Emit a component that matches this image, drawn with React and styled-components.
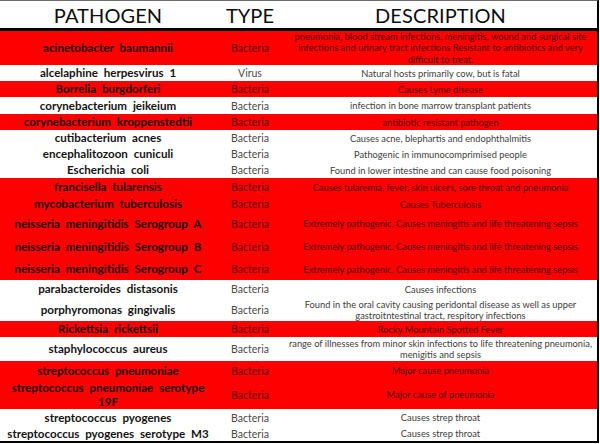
import React from "react";
import styled, { createGlobalStyle } from "styled-components";

const Global = createGlobalStyle`
  html, body { margin: 0; padding: 0; background: #fff; }
  body { font-family: Lato, "Liberation Sans", sans-serif; }
`;

const RED = "#ff0000";
const COLS = "216px 68px 1fr";

const Table = styled.div`
  width: 599px;
  box-sizing: border-box;
  border-top: 1px solid #6b6b6b;
  border-right: 2px solid #000;
  border-bottom: 2px solid #000;
  display: flex;
  flex-direction: column;
`;

const HeaderRow = styled.div`
  display: grid;
  grid-template-columns: ${COLS};
  height: 27px;
  border-bottom: 3px solid #000;
  background: #fff;
`;

const HeadCell = styled.div`
  display: flex;
  align-items: center;
  justify-content: center;
  font-size: 20px;
  color: #0d0d0d;
  letter-spacing: 0.1px;
  padding-top: 1px;
`;

const Row = styled.div`
  display: grid;
  grid-template-columns: ${COLS};
  height: ${(p) => p.$h}px;
  background: ${(p) => (p.$red ? RED : "#fff")};
`;

const Cell = styled.div`
  display: flex;
  align-items: center;
  justify-content: center;
  text-align: center;
  overflow: hidden;
`;

const Name = styled(Cell)`
  font-weight: 700;
  font-size: 11.6px;
  word-spacing: 3px;
  line-height: 14px;
  white-space: pre-line;
  color: ${(p) => (p.$red ? "#1a0000" : "#141414")};
`;

const Kind = styled(Cell)`
  font-size: 10.5px;
  color: ${(p) => (p.$red ? "#5c0000" : "#4a4a4a")};
`;

const Desc = styled(Cell)`
  font-size: 9.3px;
  line-height: ${(p) => p.$lh || 11}px;
  white-space: pre-line;
  padding: 0 2px;
  color: ${(p) => (p.$red ? "#4d0000" : "#3d3d3d")};
`;

const rows = [
  { h: 34, red: true, lh: 11.3, name: "acinetobacter baumannii", type: "Bacteria", desc: "pneumonia, blood stream infections, meningitis, wound and surgical site\ninfections and urinary tract infections Resistant to antibiotics and very\ndifficult to treat." },
  { h: 16, name: "alcelaphine herpesvirus 1", type: "Virus", desc: "Natural hosts primarily cow, but is fatal" },
  { h: 16, red: true, name: "Borrelia burgdorferi", type: "Bacteria", desc: "Causes Lyme disease" },
  { h: 17, name: "corynebacterium jeikeium", type: "Bacteria", desc: "infection in bone marrow transplant patients" },
  { h: 16, red: true, name: "corynebacterium kroppenstedtii", type: "Bacteria", desc: "antibiotic resistant pathogen" },
  { h: 16, name: "cutibacterium acnes", type: "Bacteria", desc: "Causes acne, blephartis and endophthalmitis" },
  { h: 16, name: "encephalitozoon cuniculi", type: "Bacteria", desc: "Pathogenic in immunocomprimised  people" },
  { h: 16, name: "Escherichia coli", type: "Bacteria", desc: "Found in lower intestine and can cause food poisoning" },
  { h: 18, red: true, name: "francisella tularensis", type: "Bacteria", desc: "Causes tularemia, fever, skin ulcers, sore throat and pneumonia" },
  { h: 16, red: true, name: "mycobacterium tuberculosis", type: "Bacteria", desc: "Causes Tuberculosis" },
  { h: 23, red: true, name: "neisseria meningitidis Serogroup A", type: "Bacteria", desc: "Extremely pathogenic. Causes meningitis and life threatening sepsis" },
  { h: 23, red: true, name: "neisseria meningitidis Serogroup B", type: "Bacteria", desc: "Extremely pathogenic. Causes meningitis and life threatening sepsis" },
  { h: 22, red: true, name: "neisseria meningitidis Serogroup C", type: "Bacteria", desc: "Extremely pathogenic. Causes meningitis and life threatening sepsis" },
  { h: 18, name: "parabacteroides distasonis", type: "Bacteria", desc: "Causes infections" },
  { h: 23, name: "porphyromonas gingivalis", type: "Bacteria", desc: "Found in the oral cavity causing peridontal disease as well as upper\ngastroitntestinal tract, respitory infections" },
  { h: 16, red: true, name: "Rickettsia rickettsii", type: "Bacteria", desc: "Rocky Mountain Spotted Fever" },
  { h: 24, name: "staphylococcus aureus", type: "Bacteria", desc: "range of illnesses from minor skin infections to life threatening pneumonia,\nmenigitis and sepsis" },
  { h: 19, red: true, name: "streptococcus pneumoniae", type: "Bacteria", desc: "Major cause pneumonia" },
  { h: 29, red: true, name: "streptococcus pneumoniae serotype\n19F", type: "Bacteria", desc: "Major cause of pneumonia" },
  { h: 17, name: "streptococcus pyogenes", type: "Bacteria", desc: "Causes strep throat" },
  { h: 15, name: "streptococcus pyogenes serotype M3", type: "Bacteria", desc: "Causes strep throat" },
];

export default function App() {
  return (
    <>
      <Global />
      <Table>
        <HeaderRow>
          <HeadCell>PATHOGEN</HeadCell>
          <HeadCell>TYPE</HeadCell>
          <HeadCell>DESCRIPTION</HeadCell>
        </HeaderRow>
        {rows.map((r, i) => (
          <Row key={i} $h={r.h} $red={r.red}>
            <Name $red={r.red}>{r.name}</Name>
            <Kind $red={r.red}>{r.type}</Kind>
            <Desc $red={r.red} $lh={r.lh}>{r.desc}</Desc>
          </Row>
        ))}
      </Table>
    </>
  );
}
